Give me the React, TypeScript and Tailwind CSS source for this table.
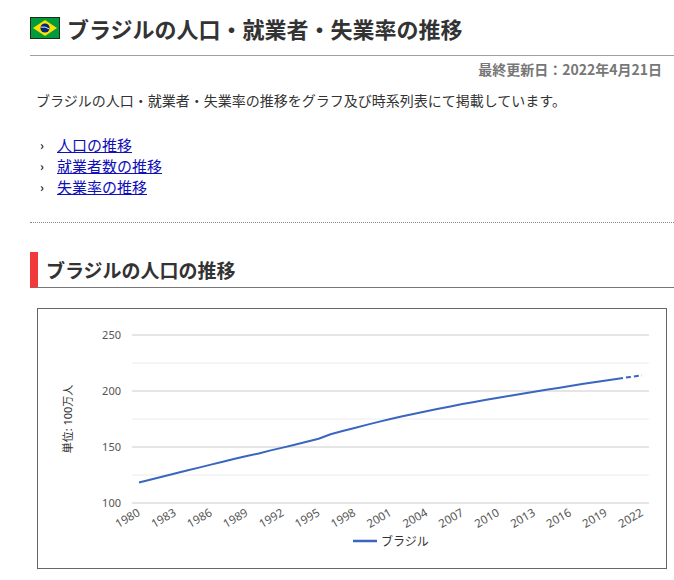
import React from "react";

const JP = "font-['Noto_Sans_CJK_JP','Noto_Sans',sans-serif]";

// population in millions (IMF style estimates)
const population: [number, number][] = [
  [1980, 118.3], [1981, 121.0], [1982, 123.7], [1983, 126.3], [1984, 129.0],
  [1985, 131.6], [1986, 134.3], [1987, 136.9], [1988, 139.5], [1989, 142.0],
  [1990, 144.2], [1991, 147.0], [1992, 149.5], [1993, 152.0], [1994, 154.6],
  [1995, 157.4], [1996, 161.4], [1997, 164.3], [1998, 167.0], [1999, 169.7],
  [2000, 172.4], [2001, 175.0], [2002, 177.4], [2003, 179.7], [2004, 181.9],
  [2005, 184.1], [2006, 186.2], [2007, 188.3], [2008, 190.3], [2009, 192.2],
  [2010, 194.0], [2011, 195.8], [2012, 197.6], [2013, 199.4], [2014, 201.1],
  [2015, 202.8], [2016, 204.5], [2017, 206.2], [2018, 207.8], [2019, 209.4],
  [2020, 211.0], [2021, 212.5], [2022, 213.9],
];

const BrazilFlag = () => (
  <svg width="30" height="22" viewBox="0 0 30 22" className="shrink-0">
    <rect x="0.5" y="0.5" width="29" height="21" fill="#009c3b" stroke="#1f2a1f" />
    <polygon points="15,3 27,11 15,19 3,11" fill="#ffdf00" />
    <circle cx="15" cy="11" r="4.6" fill="#002776" />
    <path d="M10.6 10.2 Q15 9 19.4 12" stroke="#fff" strokeWidth="0.9" fill="none" />
  </svg>
);

const PopulationChart = () => {
  const x = (year: number) => 139 + (year - 1980) * (503 / 42);
  const y = (v: number) => 502 - (v - 100) * 1.12;

  const solid = population.filter(([yr]) => yr <= 2020);
  const dashed = population.filter(([yr]) => yr >= 2020);
  const pts = (arr: [number, number][]) =>
    arr.map(([yr, v]) => `${x(yr).toFixed(1)},${y(v).toFixed(1)}`).join(" ");

  const major = [250, 200, 150, 100];
  const minor = [225, 175, 125];
  const years = Array.from({ length: 15 }, (_, i) => 1980 + i * 3);

  return (
    <svg
      viewBox="38 308 628 259"
      width="628"
      height="259"
      className="block"
      fontFamily="'Noto Sans','Noto Sans CJK JP',sans-serif"
    >
      {minor.map((v) => (
        <line key={v} x1={132} x2={649} y1={y(v)} y2={y(v)} stroke="#ececec" strokeWidth={1} />
      ))}
      {major.map((v) => (
        <line key={v} x1={132} x2={649} y1={y(v)} y2={y(v)} stroke="#cccccc" strokeWidth={1} />
      ))}
      {major.map((v) => (
        <text key={v} x={121} y={y(v) + 4} textAnchor="end" fontSize={11} fill="#555">
          {v}
        </text>
      ))}

      <text
        x={69}
        y={418}
        transform="rotate(-90 69 418)"
        textAnchor="middle"
        dominantBaseline="middle"
        fontSize={11}
        fill="#333"
      >
        単位: 100万人
      </text>

      {years.map((yr) => (
        <text
          key={yr}
          x={x(yr) + 2}
          y={514}
          transform={`rotate(-30 ${x(yr) + 2} 514)`}
          textAnchor="end"
          fontSize={11.5}
          fill="#555"
        >
          {yr}
        </text>
      ))}

      <polyline points={pts(solid)} fill="none" stroke="#3a66c0" strokeWidth={2} strokeLinejoin="round" />
      <polyline
        points={pts(dashed)}
        fill="none"
        stroke="#3a66c0"
        strokeWidth={2}
        strokeDasharray="5 3"
      />

      {/* legend */}
      <line x1={353} x2={377} y1={540} y2={540} stroke="#3a66c0" strokeWidth={2.5} />
      <text x={381} y={544.5} fontSize={12} fill="#333">
        ブラジル
      </text>
    </svg>
  );
};

export default function App() {
  return (
    <div className={`w-[674px] bg-white pl-[30px] pt-[14px] text-[#333] ${JP}`}>
      {/* page title */}
      <div className="flex items-center gap-[7px] border-b border-[#a0a0a0] pb-[13px]">
        <BrazilFlag />
        <h1 className="text-[22px] font-bold leading-[28px] text-[#333]">
          ブラジルの人口・就業者・失業率の推移
        </h1>
      </div>

      <div className="mt-[3px] pr-[12px] text-right text-[14px] font-bold leading-[20px] text-[#777]">
        最終更新日：2022年4月21日
      </div>

      <p className="mt-[11px] pl-[6px] text-[14px] leading-[20px] text-[#333]">
        ブラジルの人口・就業者・失業率の推移をグラフ及び時系列表にて掲載しています。
      </p>

      <ul className="mt-[24px] pl-[10px]">
        {["人口の推移", "就業者数の推移", "失業率の推移"].map((item) => (
          <li key={item} className="flex items-center text-[15px] leading-[21px]">
            <span className="w-[17px] text-[12px] font-bold text-[#222]">›</span>
            <a href="#" className="text-[#1010b8] underline underline-offset-1">
              {item}
            </a>
          </li>
        ))}
      </ul>

      <div className="mt-[25px] border-t border-dotted border-[#888]" />

      {/* section heading */}
      <h2 className="mt-[29px] border-b border-l-[8px] border-b-[#777] border-l-[#f23a3a] pl-[8px] text-[19px] font-bold leading-[35px] text-[#333]">
        ブラジルの人口の推移
      </h2>

      <div className="ml-[7px] mt-[20px] w-[630px] border border-[#666]">
        <PopulationChart />
      </div>

      <div className="mt-[9px] w-[630px] text-center text-[13px] leading-[20px] text-[#1010b8]">
        出典：IMF - World Economic Outlook Databases (2022年4月版)
      </div>
    </div>
  );
}
